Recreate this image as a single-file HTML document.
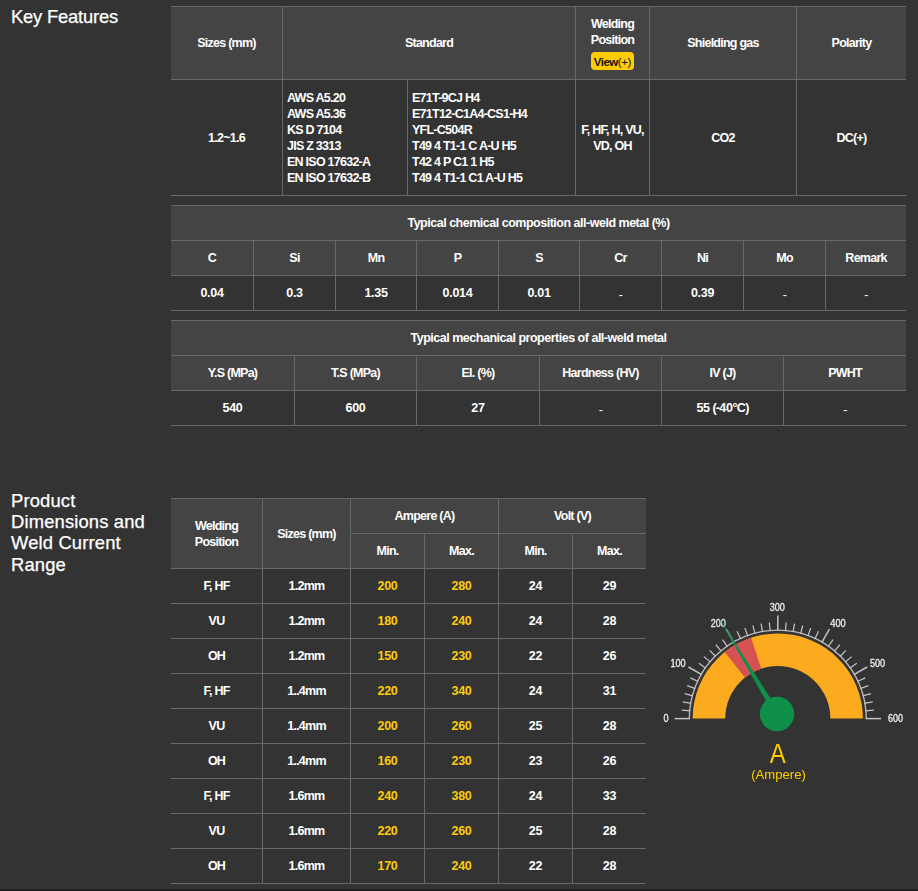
<!DOCTYPE html>
<html><head><meta charset="utf-8"><title>Key Features</title>
<style>
*{box-sizing:border-box;margin:0;padding:0}
html,body{width:918px;height:891px;overflow:hidden;background:#333;}
body{position:relative;font-family:"Liberation Sans",sans-serif;color:#fff;}
h2{position:absolute;left:11px;font-size:18.4px;font-weight:normal;line-height:21.45px;letter-spacing:-0.2px;color:#fff;white-space:nowrap;-webkit-text-stroke:0.25px #fff}
table{position:absolute;left:171px;border-collapse:separate;border-spacing:0;table-layout:fixed;border-top:1px solid #686868;}
th,td{font-size:12.5px;font-weight:bold;letter-spacing:-0.75px;text-align:center;vertical-align:middle;height:35px;border-bottom:1px solid #686868;border-right:1px solid #686868;line-height:16px;overflow:hidden;white-space:nowrap;padding:0}
th{background:#444}
tr>*:last-child{border-right:none}
td.l{text-align:left;padding-left:4px}
.t{letter-spacing:-0.49px}
.y{color:#fccb0c}
.h{position:relative;top:2px;font-weight:normal}
.n{letter-spacing:-0.3px}
.btn{display:block;margin:4px auto 0;width:43px;height:18px;line-height:21px;border-radius:4px;background:#ffcb05;color:#111;font-size:11.5px;letter-spacing:-0.55px}
.btn i{font-style:normal;font-weight:normal;letter-spacing:-0.3px}
.bot{position:absolute;left:0;top:889px;width:918px;height:2px;background:#1f201f}
svg{position:absolute;left:0;top:0;will-change:transform;font-family:"Liberation Sans",sans-serif}
</style></head><body>
<h2 style="top:5.9px">Key Features</h2>
<table style="top:6px;width:735px">
<colgroup><col style="width:112px"><col style="width:125px"><col style="width:168px"><col style="width:74px"><col style="width:147px"><col style="width:109px"></colgroup>
<tr><th style="height:73px">Sizes (mm)</th><th colspan="2">Standard</th><th>Welding<br>Position<span class="btn">View<i>(+)</i></span></th><th>Shielding gas</th><th>Polarity</th></tr>
<tr><td style="height:116px">1.2~1.6</td><td class="l">AWS A5.20<br>AWS A5.36<br>KS D 7104<br>JIS Z 3313<br>EN ISO 17632-A<br>EN ISO 17632-B</td><td class="l">E71T-9CJ H4<br>E71T12-C1A4-CS1-H4<br>YFL-C504R<br>T49 4 T1-1 C A-U H5<br>T42 4 P C1 1 H5<br>T49 4 T1-1 C1 A-U H5</td><td>F, HF, H, VU,<br>VD, OH</td><td>CO2</td><td>DC(+)</td></tr>
</table>
<table style="top:205px;width:735px">
<colgroup><col style="width:83px"><col style="width:82px"><col style="width:81px"><col style="width:82px"><col style="width:81px"><col style="width:82px"><col style="width:82px"><col style="width:82px"><col style="width:80px"></colgroup>
<tr><th colspan="9" class="t">Typical chemical composition all-weld metal (%)</th></tr>
<tr><th>C</th><th>Si</th><th>Mn</th><th>P</th><th>S</th><th>Cr</th><th>Ni</th><th>Mo</th><th>Remark</th></tr>
<tr><td class="n">0.04</td><td class="n">0.3</td><td class="n">1.35</td><td class="n">0.014</td><td class="n">0.01</td><td><span class="h">-</span></td><td class="n">0.39</td><td><span class="h">-</span></td><td><span class="h">-</span></td></tr>
</table>
<table style="top:320px;width:735px">
<colgroup><col style="width:124px"><col style="width:122px"><col style="width:123px"><col style="width:122px"><col style="width:122px"><col style="width:122px"></colgroup>
<tr><th colspan="6" class="t">Typical mechanical properties of all-weld metal</th></tr>
<tr><th>Y.S (MPa)</th><th>T.S (MPa)</th><th>El. (%)</th><th>Hardness (HV)</th><th>IV (J)</th><th>PWHT</th></tr>
<tr><td class="n">540</td><td class="n">600</td><td class="n">27</td><td><span class="h">-</span></td><td><span class="n">55</span> (-<span class="n">40</span>&deg;C)</td><td><span class="h">-</span></td></tr>
</table>
<h2 style="top:489.5px;letter-spacing:0.15px">Product<br>Dimensions and<br>Weld Current<br>Range</h2>
<table style="top:498px;width:475px">
<colgroup><col style="width:92px"><col style="width:88px"><col style="width:74px"><col style="width:74px"><col style="width:74px"><col style="width:73px"></colgroup>
<tr><th rowspan="2">Welding<br>Position</th><th rowspan="2">Sizes (mm)</th><th colspan="2">Ampere (A)</th><th colspan="2" style="border-right:none">Volt (V)</th></tr>
<tr><th>Min.</th><th>Max.</th><th>Min.</th><th>Max.</th></tr>
<tr><td>F, HF</td><td>1.2mm</td><td class="y n">200</td><td class="y n">280</td><td class="n">24</td><td class="n">29</td></tr>
<tr><td>VU</td><td>1.2mm</td><td class="y n">180</td><td class="y n">240</td><td class="n">24</td><td class="n">28</td></tr>
<tr><td>OH</td><td>1.2mm</td><td class="y n">150</td><td class="y n">230</td><td class="n">22</td><td class="n">26</td></tr>
<tr><td>F, HF</td><td>1..4mm</td><td class="y n">220</td><td class="y n">340</td><td class="n">24</td><td class="n">31</td></tr>
<tr><td>VU</td><td>1..4mm</td><td class="y n">200</td><td class="y n">260</td><td class="n">25</td><td class="n">28</td></tr>
<tr><td>OH</td><td>1..4mm</td><td class="y n">160</td><td class="y n">230</td><td class="n">23</td><td class="n">26</td></tr>
<tr><td>F, HF</td><td>1.6mm</td><td class="y n">240</td><td class="y n">380</td><td class="n">24</td><td class="n">33</td></tr>
<tr><td>VU</td><td>1.6mm</td><td class="y n">220</td><td class="y n">260</td><td class="n">25</td><td class="n">28</td></tr>
<tr><td>OH</td><td>1.6mm</td><td class="y n">170</td><td class="y n">240</td><td class="n">22</td><td class="n">28</td></tr>
</table>
<svg width="918" height="891" viewBox="0 0 918 891">
<path d="M692.65,718.60 A85.15,85.15 0 0 1 862.95,718.60 L830.40,718.60 A52.6,52.6 0 0 0 725.20,718.60 Z" fill="#fcaa1e"/>
<path d="M724.68,652.05 A85.15,85.15 0 0 1 751.06,637.76 L761.28,668.66 A52.6,52.6 0 0 0 744.98,677.49 Z" fill="#d45251"/>
<path d="M689.30,718.60 A88.5,88.5 0 0 1 866.30,718.60" fill="none" stroke="#b9b9b9" stroke-width="1.35"/>
<line x1="690.00" y1="718.60" x2="674.60" y2="718.60" stroke="#c4c4c4" stroke-width="1.5"/>
<line x1="690.33" y1="710.95" x2="681.77" y2="710.20" stroke="#c4c4c4" stroke-width="1.2"/>
<line x1="691.33" y1="703.35" x2="682.86" y2="701.86" stroke="#c4c4c4" stroke-width="1.2"/>
<line x1="692.99" y1="695.88" x2="684.68" y2="693.65" stroke="#c4c4c4" stroke-width="1.2"/>
<line x1="695.29" y1="688.57" x2="687.21" y2="685.63" stroke="#c4c4c4" stroke-width="1.2"/>
<line x1="698.23" y1="681.49" x2="690.43" y2="677.86" stroke="#c4c4c4" stroke-width="1.2"/>
<line x1="701.76" y1="674.70" x2="688.43" y2="667.00" stroke="#c4c4c4" stroke-width="1.5"/>
<line x1="705.88" y1="668.24" x2="698.83" y2="663.31" stroke="#c4c4c4" stroke-width="1.2"/>
<line x1="710.54" y1="662.16" x2="703.95" y2="656.64" stroke="#c4c4c4" stroke-width="1.2"/>
<line x1="715.72" y1="656.52" x2="709.63" y2="650.43" stroke="#c4c4c4" stroke-width="1.2"/>
<line x1="721.36" y1="651.34" x2="715.84" y2="644.75" stroke="#c4c4c4" stroke-width="1.2"/>
<line x1="727.44" y1="646.68" x2="722.51" y2="639.63" stroke="#c4c4c4" stroke-width="1.2"/>
<line x1="733.90" y1="642.56" x2="726.20" y2="629.23" stroke="#c4c4c4" stroke-width="1.5"/>
<line x1="740.69" y1="639.03" x2="737.06" y2="631.23" stroke="#c4c4c4" stroke-width="1.2"/>
<line x1="747.77" y1="636.09" x2="744.83" y2="628.01" stroke="#c4c4c4" stroke-width="1.2"/>
<line x1="755.08" y1="633.79" x2="752.85" y2="625.48" stroke="#c4c4c4" stroke-width="1.2"/>
<line x1="762.55" y1="632.13" x2="761.06" y2="623.66" stroke="#c4c4c4" stroke-width="1.2"/>
<line x1="770.15" y1="631.13" x2="769.40" y2="622.57" stroke="#c4c4c4" stroke-width="1.2"/>
<line x1="777.80" y1="630.80" x2="777.80" y2="615.40" stroke="#c4c4c4" stroke-width="1.5"/>
<line x1="785.45" y1="631.13" x2="786.20" y2="622.57" stroke="#c4c4c4" stroke-width="1.2"/>
<line x1="793.05" y1="632.13" x2="794.54" y2="623.66" stroke="#c4c4c4" stroke-width="1.2"/>
<line x1="800.52" y1="633.79" x2="802.75" y2="625.48" stroke="#c4c4c4" stroke-width="1.2"/>
<line x1="807.83" y1="636.09" x2="810.77" y2="628.01" stroke="#c4c4c4" stroke-width="1.2"/>
<line x1="814.91" y1="639.03" x2="818.54" y2="631.23" stroke="#c4c4c4" stroke-width="1.2"/>
<line x1="821.70" y1="642.56" x2="829.40" y2="629.23" stroke="#c4c4c4" stroke-width="1.5"/>
<line x1="828.16" y1="646.68" x2="833.09" y2="639.63" stroke="#c4c4c4" stroke-width="1.2"/>
<line x1="834.24" y1="651.34" x2="839.76" y2="644.75" stroke="#c4c4c4" stroke-width="1.2"/>
<line x1="839.88" y1="656.52" x2="845.97" y2="650.43" stroke="#c4c4c4" stroke-width="1.2"/>
<line x1="845.06" y1="662.16" x2="851.65" y2="656.64" stroke="#c4c4c4" stroke-width="1.2"/>
<line x1="849.72" y1="668.24" x2="856.77" y2="663.31" stroke="#c4c4c4" stroke-width="1.2"/>
<line x1="853.84" y1="674.70" x2="867.17" y2="667.00" stroke="#c4c4c4" stroke-width="1.5"/>
<line x1="857.37" y1="681.49" x2="865.17" y2="677.86" stroke="#c4c4c4" stroke-width="1.2"/>
<line x1="860.31" y1="688.57" x2="868.39" y2="685.63" stroke="#c4c4c4" stroke-width="1.2"/>
<line x1="862.61" y1="695.88" x2="870.92" y2="693.65" stroke="#c4c4c4" stroke-width="1.2"/>
<line x1="864.27" y1="703.35" x2="872.74" y2="701.86" stroke="#c4c4c4" stroke-width="1.2"/>
<line x1="865.27" y1="710.95" x2="873.83" y2="710.20" stroke="#c4c4c4" stroke-width="1.2"/>
<line x1="865.60" y1="718.60" x2="881.00" y2="718.60" stroke="#c4c4c4" stroke-width="1.5"/>
<text x="666.1" y="722.4" text-anchor="middle" font-size="10.3" textLength="5.1" lengthAdjust="spacingAndGlyphs" fill="#eee" stroke="#eee" stroke-width="0.3">0</text>
<text x="678.0" y="667.4" text-anchor="middle" font-size="10.3" textLength="15.200000000000001" lengthAdjust="spacingAndGlyphs" fill="#eee" stroke="#eee" stroke-width="0.3">100</text>
<text x="718.3" y="627.1" text-anchor="middle" font-size="10.3" textLength="15.200000000000001" lengthAdjust="spacingAndGlyphs" fill="#eee" stroke="#eee" stroke-width="0.3">200</text>
<text x="777.3" y="611.2" text-anchor="middle" font-size="10.3" textLength="15.200000000000001" lengthAdjust="spacingAndGlyphs" fill="#eee" stroke="#eee" stroke-width="0.3">300</text>
<text x="838.0" y="626.9" text-anchor="middle" font-size="10.3" textLength="15.4" lengthAdjust="spacingAndGlyphs" fill="#eee" stroke="#eee" stroke-width="0.3">400</text>
<text x="877.5" y="667.2" text-anchor="middle" font-size="10.3" textLength="15.200000000000001" lengthAdjust="spacingAndGlyphs" fill="#eee" stroke="#eee" stroke-width="0.3">500</text>
<text x="895.5" y="722.4" text-anchor="middle" font-size="10.3" textLength="15.0" lengthAdjust="spacingAndGlyphs" fill="#eee" stroke="#eee" stroke-width="0.3">600</text>
<path d="M779.65,712.40 L715.50,612.20 L774.35,715.60 Z" fill="#0f9049"/>
<circle cx="777.0" cy="714.0" r="17.2" fill="#0f9049"/>
<text x="777.8" y="763.2" text-anchor="middle" font-size="27.3" textLength="16" lengthAdjust="spacingAndGlyphs" fill="#ffcd05">A</text>
<text x="778.5" y="778.6" text-anchor="middle" font-size="13.1" fill="#ffcd05">(Ampere)</text>
</svg>
<div class="bot"></div>
</body></html>
